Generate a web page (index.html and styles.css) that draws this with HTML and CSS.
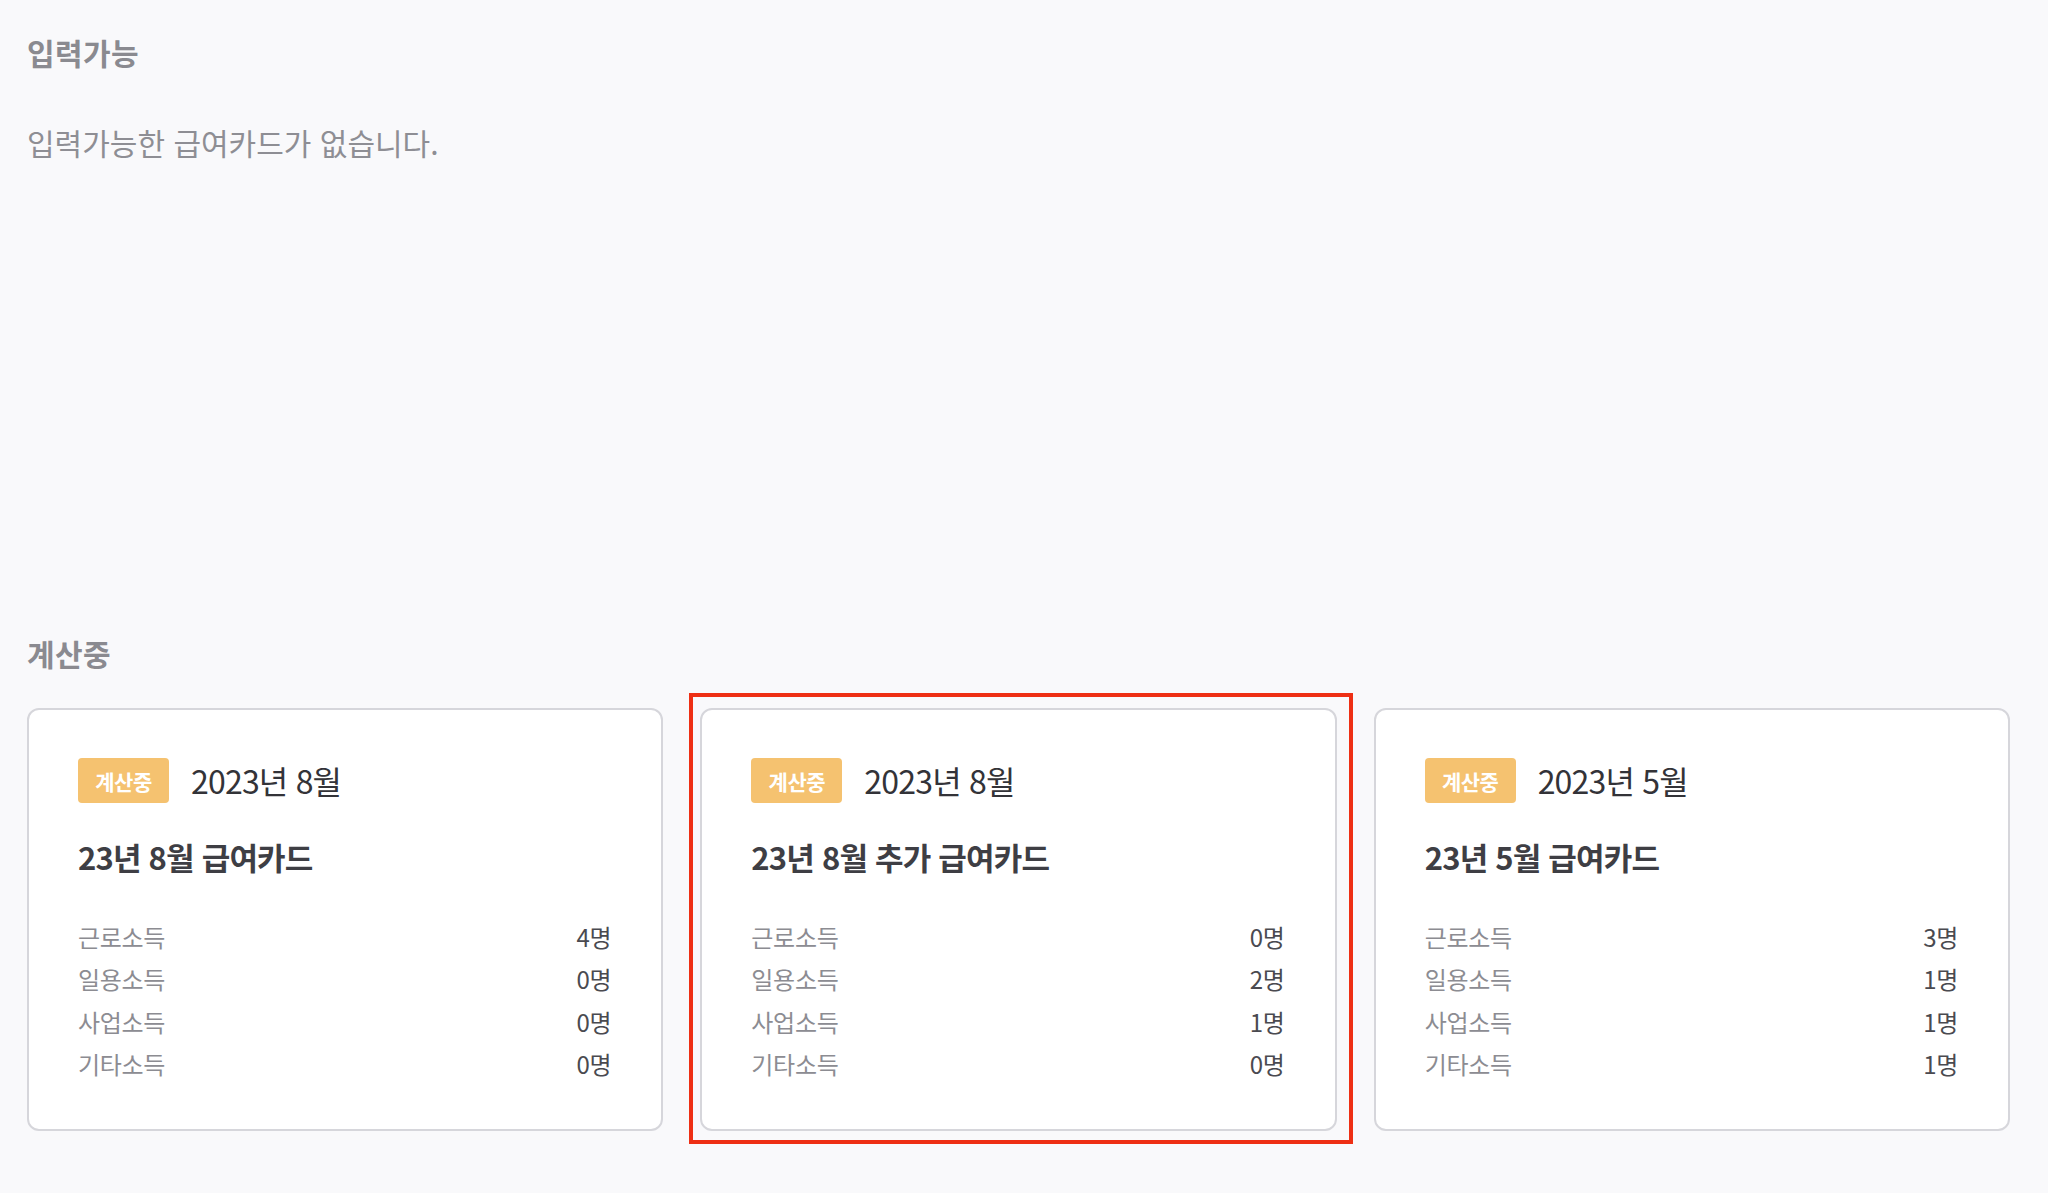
FILE: index.html
```html
<!DOCTYPE html>
<html lang="ko">
<head>
<meta charset="utf-8">
<title>급여카드</title>
<link rel="stylesheet" href="styles.css">
</head>
<body>
<main class="page">
  <section class="section section-input">
    <h2 class="section-title">입력가능</h2>
    <p class="empty-text">입력가능한 급여카드가 없습니다.</p>
  </section>

  <section class="section section-calc">
    <h2 class="section-title">계산중</h2>
    <div class="card-grid">
      <article class="card">
        <div class="card-head">
          <span class="badge">계산중</span>
          <span class="card-date">2023년 8월</span>
        </div>
        <h3 class="card-title">23년 8월 급여카드</h3>
        <dl class="stats">
          <div class="stat"><dt>근로소득</dt><dd>4명</dd></div>
          <div class="stat"><dt>일용소득</dt><dd>0명</dd></div>
          <div class="stat"><dt>사업소득</dt><dd>0명</dd></div>
          <div class="stat"><dt>기타소득</dt><dd>0명</dd></div>
        </dl>
      </article>

      <article class="card card-highlight">
        <div class="card-head">
          <span class="badge">계산중</span>
          <span class="card-date">2023년 8월</span>
        </div>
        <h3 class="card-title">23년 8월 추가 급여카드</h3>
        <dl class="stats">
          <div class="stat"><dt>근로소득</dt><dd>0명</dd></div>
          <div class="stat"><dt>일용소득</dt><dd>2명</dd></div>
          <div class="stat"><dt>사업소득</dt><dd>1명</dd></div>
          <div class="stat"><dt>기타소득</dt><dd>0명</dd></div>
        </dl>
      </article>

      <article class="card">
        <div class="card-head">
          <span class="badge">계산중</span>
          <span class="card-date">2023년 5월</span>
        </div>
        <h3 class="card-title">23년 5월 급여카드</h3>
        <dl class="stats">
          <div class="stat"><dt>근로소득</dt><dd>3명</dd></div>
          <div class="stat"><dt>일용소득</dt><dd>1명</dd></div>
          <div class="stat"><dt>사업소득</dt><dd>1명</dd></div>
          <div class="stat"><dt>기타소득</dt><dd>1명</dd></div>
        </dl>
      </article>
    </div>
  </section>
</main>
</body>
</html>
```

FILE: styles.css
```css
* { box-sizing: border-box; }

html, body {
  margin: 0;
  padding: 0;
  background: #f9f9fb;
}

body {
  font-family: "Noto Sans CJK KR", "Noto Sans", sans-serif;
  color: #333;
}

.page {
  padding: 32px 38px 60px 27px;
}

.section-title {
  margin: 0;
  font-size: 30px;
  line-height: 40px;
  font-weight: 700;
  color: #8a8a90;
  letter-spacing: 0.4px;
}

.empty-text {
  margin: 50px 0 0;
  font-size: 30px;
  line-height: 40px;
  font-weight: 400;
  color: #8e8e94;
  letter-spacing: 0;
}

.section-calc {
  margin-top: 471px;
}

.card-grid {
  margin-top: 35px;
  display: grid;
  grid-template-columns: repeat(3, 1fr);
  gap: 37px;
}

.card {
  position: relative;
  background: #fff;
  border: 2px solid #d6d6db;
  border-radius: 12px;
  padding: 48px 50px 44px 49px;
}

.card-highlight::after {
  content: "";
  position: absolute;
  left: -13px;
  right: -18px;
  top: -17px;
  bottom: -15px;
  border: 4px solid #ee2f14;
  pointer-events: none;
}

.card-head {
  display: flex;
  align-items: center;
  gap: 22px;
}

.badge {
  display: inline-flex;
  align-items: center;
  justify-content: center;
  width: 91px;
  height: 45px;
  border-radius: 4px;
  background: #f5c270;
  color: #fff;
  font-size: 21px;
  font-weight: 700;
  letter-spacing: -0.5px;
}

.card-date {
  font-size: 32px;
  line-height: 45px;
  color: #333338;
  letter-spacing: -0.8px;
}

.card-title {
  margin: 34px 0 0;
  font-size: 31px;
  line-height: 40px;
  font-weight: 700;
  color: #3e3e44;
  letter-spacing: -0.8px;
}

.stats {
  margin: 38px 0 0;
  display: flex;
  flex-direction: column;
}

.stat {
  display: flex;
  justify-content: space-between;
  align-items: center;
  height: 42.5px;
}

.stat dt {
  font-size: 24px;
  color: #8c8c92;
  letter-spacing: -0.3px;
}

.stat dd {
  margin: 0;
  font-size: 24px;
  color: #4a4a50;
  letter-spacing: -0.3px;
}
```
